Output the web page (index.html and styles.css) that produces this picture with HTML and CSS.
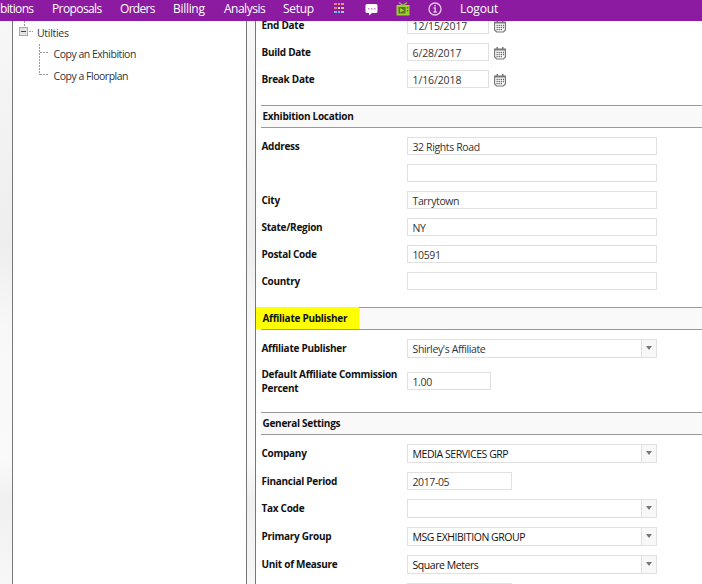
FILE: index.html
```html
<!DOCTYPE html>
<html lang="en">
<head>
<meta charset="utf-8">
<title>Exhibition</title>
<link rel="stylesheet" href="styles.css">
</head>
<body>
<nav class="nav">
  <span class="n1">bitions</span><span class="n2">Proposals</span><span class="n3">Orders</span><span class="n4">Billing</span><span class="n5">Analysis</span><span class="n6">Setup</span>
  <svg class="i-grid" width="11" height="11" shape-rendering="crispEdges"><path fill="#e8789a" d="M0 0h3v2H0zM0 4h3v2H0z"/><path fill="#f09a50" d="M4 0h2v2H4zM7 0h3v2H7z"/><path fill="#f0d8a8" d="M4 4h2v2H4z"/><path fill="#d0c878" d="M7 4h3v2H7z"/><path fill="#78b8f0" d="M0 8h3v2H0zM4 8h2v2H4z"/><path fill="#90d8c0" d="M7 8h3v2H7z"/></svg>
  <svg class="i-chat" width="13" height="12"><path fill="#fff" d="M2 0h9q1.500 0 1.500 1.500v6q0 1.500-1.500 1.500H7L4 11.500V9H2Q.5 9 .5 7.500v-6Q.5 0 2 0z"/><path fill="#8c1ba2" opacity=".5" d="M3 4h1.500v1.500H3zM6 4h1.500v1.500H6zM9 4h1.500v1.500H9z"/></svg>
  <svg class="i-tv" width="14" height="14"><path fill="none" stroke="#93c83b" stroke-width="1.300" d="M3 .5l4 3 4-3"/><path fill="#9bd128" d="M.5 3h13v10.500H.5z"/><path fill="#5c6d32" d="M2.500 5h7v6.500h-7z"/><path fill="#9bd128" d="M4 6l4.500 2.200L4 10.500z"/><path fill="#54702b" d="M11 5h1.200v1.500H11zM11 8h1.200v1.500H11z"/></svg>
  <svg class="i-info" width="14" height="14" fill="none" stroke="#e5c9ea"><circle cx="7" cy="7" r="6" stroke-width="1.300"/><path d="M5.500 6h1.700v4M5.500 10h3.200" stroke-width="1.300"/><path d="M6.300 3.700h1.500" stroke-width="1.500"/></svg>
  <span>Logout</span>
</nav>
<main class="main">
  <aside class="tree">
    <svg class="branches" width="36" height="56" shape-rendering="crispEdges"><g fill="none" stroke="#999" stroke-dasharray="2 1"><path d="M11.500 0v6M16 10.500h4M26.500 23v31M27 31.500h9M27 53.500h9"/></g><path fill="#e4e4e4" stroke="#aaa" d="M6.500 6.500h8v8h-8z"/><path stroke="#444" d="M8 10.500h5"/></svg>
    <ul class="nodes"><li class="root">Utilties</li><li>Copy an Exhibition</li><li>Copy a Floorplan</li></ul>
  </aside>
  <section class="form">
    <div class="row"><label>End Date</label><div class="field date">12/15/2017</div><svg class="cal" width="12" height="13"><use href="#cal"/></svg></div>
    <div class="row"><label>Build Date</label><div class="field date">6/28/2017</div><svg class="cal" width="12" height="13"><g id="cal"><path fill="#fff" stroke="#777" stroke-width="1.200" d="M.6 2h10.800v8l-2 2H2.600l-2-2z"/><path fill="#777" d="M1 2h10v1.500H1zM2.500 0h1.500v2H2.500zM8 0h1.500v2H8z"/><path fill="none" stroke="#666" stroke-width="1.300" stroke-dasharray="1.300 .8" d="M2.500 5.500h7.500M2.500 7.600h7.500M2.500 9.700h5.500"/></g></svg></div>
    <div class="row last"><label>Break Date</label><div class="field date">1/16/2018</div><svg class="cal" width="12" height="13"><use href="#cal"/></svg></div>
    <h2>Exhibition Location</h2>
    <div class="row"><label>Address</label><div class="field wide">32 Rights Road</div></div>
    <div class="row"><label></label><div class="field wide"></div></div>
    <div class="row"><label>City</label><div class="field wide">Tarrytown</div></div>
    <div class="row"><label>State/Region</label><div class="field wide">NY</div></div>
    <div class="row"><label>Postal Code</label><div class="field wide">10591</div></div>
    <div class="row last"><label>Country</label><div class="field wide"></div></div>
    <h2 class="marked">Affiliate Publisher</h2>
    <div class="row r33"><label>Affiliate Publisher</label><div class="field select">Shirley's Affiliate<i class="arrow"></i></div></div>
    <div class="row r40"><label class="two">Default Affiliate Commission<br>Percent</label><div class="field pct">1.00</div></div>
    <h2>General Settings</h2>
    <div class="row r28"><label>Company</label><div class="field select dark">MEDIA SERVICES GRP<i class="arrow"></i></div></div>
    <div class="row"><label>Financial Period</label><div class="field period">2017-05</div></div>
    <div class="row r28"><label>Tax Code</label><div class="field select"><i class="arrow"></i></div></div>
    <div class="row r28"><label>Primary Group</label><div class="field select dark">MSG EXHIBITION GROUP<i class="arrow"></i></div></div>
    <div class="row r28"><label>Unit of Measure</label><div class="field select dark">Square Meters<i class="arrow"></i></div></div>
    <div class="row"><label></label><div class="field period"></div></div>
  </section>
</main>
</body>
</html>
```
FILE: styles.css
```css
* { box-sizing: border-box; }
body { margin: 0; width: 702px; height: 584px; overflow: hidden; background: #fff; font: 10.5px/18px "Open Sans", "Noto Sans", sans-serif; letter-spacing: -.38px; color: #333; }
.nav { height: 21px; background: #8c1ba2; color: #fff; display: flex; align-items: flex-start; font-size: 12px; letter-spacing: -.3px; line-height: 18px; white-space: nowrap; }
.nav span, .nav svg { flex: none; }
.n1 { width: 52px; letter-spacing: -.65px; }
.n2 { width: 68px; letter-spacing: -.6px; }
.n3 { width: 53px; letter-spacing: -.7px; }
.n4 { width: 51px; }
.n5 { width: 59px; letter-spacing: -.5px; }
.n6 { width: 50px; }
.nav span:last-child { letter-spacing: -.1px; }
.i-grid { margin: 3px 21px 0 1px; }
.i-chat { margin: 4px 18px 0 -1px; }
.i-tv { margin: 2px 18px 0 0; }
.i-info { margin: 2px 18px 0 0; }
.main { display: flex; height: 563px; background: linear-gradient(#f7f7f7, #eee 40%, #f8f8f8 55%, #fafafa 78%, #f0f0f0 85%, #f7f7f7); }
.tree { width: 235px; margin-left: 12px; border: solid #777; border-width: 0 1px; background: #fff; display: flex; }
.branches { flex: none; }
.nodes { list-style: none; margin: 3px 0 0 4.5px; padding: 0; line-height: 22px; letter-spacing: -.48px; white-space: nowrap; }
.nodes .root { margin-left: -16.5px; line-height: 19px; letter-spacing: -.3px; }
.form { margin-left: 8px; width: 447px; flex: none; border-left: 1px solid #777; background: #fff; padding-left: 5px; overflow: hidden; }
.row { display: flex; height: 27px; align-items: flex-start; }
.row:first-child { margin-top: -5px; }
.row.last { height: 35px; }
.r28 { height: 28px; }
.r33 { height: 33px; }
.r40 { height: 40px; }
label { width: 146px; flex: none; padding-left: .5px; font-size: 10px; font-weight: 700; letter-spacing: -.28px; color: #111; line-height: 19px; white-space: nowrap; }
.two { line-height: 14px; margin-top: -5px; }
.field { height: 18px; border: 1px solid #e0e0e0; background: #fff; padding-left: 4.5px; line-height: 19px; white-space: nowrap; flex: none; }
.date { width: 82px; letter-spacing: -.1px; }
.wide { width: 250px; }
.pct { width: 84px; }
.period { width: 105px; }
.select { width: 250px; height: 19px; display: flex; }
.dark { color: #111; letter-spacing: -.45px; }
.arrow { width: 15px; height: 17px; margin-left: auto; border-left: 1px solid #e0e0e0; background: #f8f8f8; }
.arrow::before { content: ""; display: block; margin: 6px 0 0 3.5px; border: solid transparent; border-width: 4px 3.5px 0; border-top-color: #777; width: 0; }
.cal { margin: 4px 0 0 5px; }
h2 { margin: 0 0 9px; height: 23px; border: solid #999; border-width: 1px 0; background: #f9f9f9; font-size: 10px; letter-spacing: -.28px; line-height: 21px; color: #111; padding-left: 1.5px; }
.marked { position: relative; z-index: 0; }
.marked::before { content: ""; position: absolute; z-index: -1; left: -5px; top: -1px; width: 103px; height: 22px; background: #ff0; }
```
